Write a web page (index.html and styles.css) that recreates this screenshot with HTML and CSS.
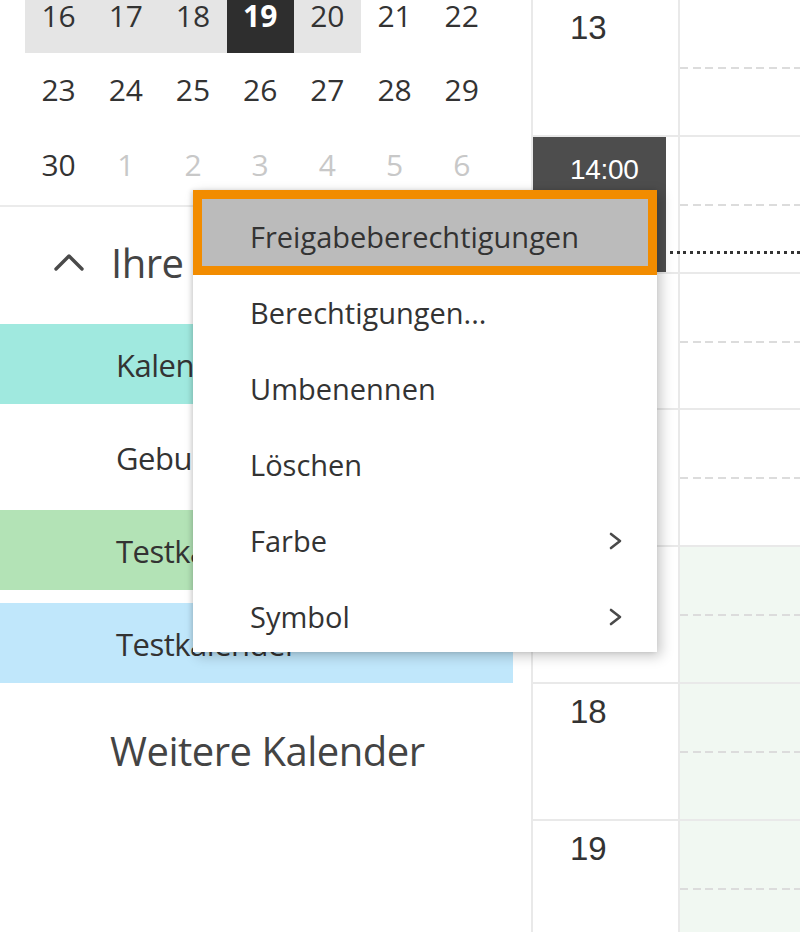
FILE: index.html
```html
<!DOCTYPE html>
<html lang="de">
<head>
<meta charset="utf-8">
<title>Kalender</title>
<link rel="stylesheet" href="styles.css">
</head>
<body>
<div class="app">
  <aside class="sidebar">
    <div class="month">
      <div class="day wk">16</div><div class="day wk">17</div><div class="day wk">18</div><div class="day today">19</div><div class="day wk">20</div><div class="day">21</div><div class="day">22</div>
      <div class="day">23</div><div class="day">24</div><div class="day">25</div><div class="day">26</div><div class="day">27</div><div class="day">28</div><div class="day">29</div>
      <div class="day">30</div><div class="day other">1</div><div class="day other">2</div><div class="day other">3</div><div class="day other">4</div><div class="day other">5</div><div class="day other">6</div>
    </div>
    <div class="sep"></div>
    <div class="group-head">
      <svg class="chev-up" width="32" height="20" viewBox="0 0 32 20"><polyline points="3,17 16,4 29,17" fill="none" stroke="#4a4a4a" stroke-width="3.4" stroke-linecap="round" stroke-linejoin="round"/></svg>
      <span class="group-title">Ihre Kalender</span>
    </div>
    <ul class="cal-list">
      <li class="cal teal">Kalender</li>
      <li class="cal">Geburtstage</li>
      <li class="cal green">Testkalender</li>
      <li class="cal blue">Testkalender</li>
    </ul>
    <div class="more">Weitere Kalender</div>
  </aside>
  <main class="timeline">
    <div class="hour"><div class="hlabel">13</div><div class="hday"><div class="half"></div></div></div>
    <div class="hour"><div class="hlabel"><div class="nowbox">14:00</div></div><div class="hday"><div class="half"></div></div></div>
    <div class="hour"><div class="hlabel"></div><div class="hday"><div class="half"></div></div></div>
    <div class="hour"><div class="hlabel"></div><div class="hday"><div class="half"></div></div></div>
    <div class="hour"><div class="hlabel"></div><div class="hday busy"><div class="half"></div></div></div>
    <div class="hour"><div class="hlabel">18</div><div class="hday busy"><div class="half"></div></div></div>
    <div class="hour"><div class="hlabel">19</div><div class="hday busy"><div class="half"></div></div></div>
  </main>
  <div class="nowline"></div>
  <div class="menu">
    <div class="mi focus">Freigabeberechtigungen</div>
    <div class="mi">Berechtigungen...</div>
    <div class="mi">Umbenennen</div>
    <div class="mi">Löschen</div>
    <div class="mi sub">Farbe<svg class="chev-r" width="16" height="20" viewBox="0 0 16 20"><polyline points="3,3 12,10 3,17" fill="none" stroke="#4a4a4a" stroke-width="2.6" stroke-linecap="round" stroke-linejoin="round"/></svg></div>
    <div class="mi sub last">Symbol<svg class="chev-r" width="16" height="20" viewBox="0 0 16 20"><polyline points="3,3 12,10 3,17" fill="none" stroke="#4a4a4a" stroke-width="2.6" stroke-linecap="round" stroke-linejoin="round"/></svg></div>
  </div>
</div>
</body>
</html>
```

FILE: styles.css
```css
* { box-sizing: border-box; }
html, body { margin: 0; padding: 0; }
body {
  width: 800px;
  height: 932px;
  overflow: hidden;
  background: #fff;
  font-family: "Open Sans", "Noto Sans", sans-serif;
  color: #333;
}
.app {
  position: relative;
  display: flex;
  height: 932px;
}
.sidebar {
  width: 533px;
  flex: 0 0 533px;
  border-right: 2px solid #e9e9e9;
}
.month {
  margin-top: -22px;
  padding-left: 25px;
  display: grid;
  grid-template-columns: repeat(7, 67.2px);
  grid-auto-rows: 74.5px;
}
.day {
  display: flex;
  align-items: center;
  justify-content: center;
  font-size: 30px;
  color: #333;
}
.day.wk { background: #e5e5e5; }
.day.today { background: #2e2e2e; color: #fff; font-weight: 700; }
.day.other { color: #c8c8c8; }
.sep {
  margin-top: 3px;
  height: 2px;
  background: #ebebeb;
}
.group-head {
  height: 117px;
  padding-bottom: 6px;
  display: flex;
  align-items: center;
}
.chev-up { margin-left: 53px; flex: none; }
.group-title {
  margin-left: 26px;
  font-size: 40px;
  letter-spacing: -0.5px;
  color: #444;
  white-space: nowrap;
}
.cal-list {
  list-style: none;
  margin: 0;
  padding: 0;
  width: 513px;
  display: flex;
  flex-direction: column;
  gap: 13px;
}
.cal {
  height: 80px;
  display: flex;
  align-items: center;
  padding-left: 116px;
  padding-top: 3px;
  font-size: 31px;
  letter-spacing: -0.5px;
  color: #333;
}
.cal.teal { background: #a0e9df; }
.cal.green { background: #b3e3b6; }
.cal.blue { background: #c0e7fb; }
.more {
  margin-top: 40px;
  padding-left: 110px;
  font-size: 40px;
  letter-spacing: -0.5px;
  color: #444;
}
.timeline {
  flex: 1;
  display: flex;
  flex-direction: column;
}
.hour {
  flex: none;
  height: 136.8px;
  display: grid;
  grid-template-columns: 147px 1fr;
  border-bottom: 2px solid #e9e9e9;
}
.hlabel {
  border-right: 2px solid #e9e9e9;
  padding: 11px 0 0 37px;
  font-family: "Liberation Sans", Arial, sans-serif;
  font-size: 33px;
  line-height: 33px;
  color: #333;
}
.hlabel:has(.nowbox) { padding: 0; }
.nowbox {
  width: 133px;
  height: 100%;
  background: #4d4d4d;
  color: #fff;
  font-family: "Liberation Sans", Arial, sans-serif;
  font-size: 28px;
  line-height: 28px;
  letter-spacing: -0.3px;
  padding: 19px 0 0 37px;
}
.hday.busy { background: #f1f8f2; }
.half {
  height: 69px;
  background: repeating-linear-gradient(to right, #dcdcdc 0 8px, transparent 8px 12.7px) left bottom / 100% 2px no-repeat;
}
.nowline {
  position: absolute;
  left: 670px;
  right: 0;
  top: 251px;
  height: 3px;
  background: repeating-linear-gradient(to right, #333 0 3px, transparent 3px 6.7px);
}
.menu {
  position: absolute;
  left: 193px;
  top: 190px;
  width: 464px;
  background: #fff;
  box-shadow: 4px 4px 12px rgba(0,0,0,0.22), -2px 0 4px rgba(0,0,0,0.12);
}
.mi {
  height: 76px;
  line-height: 76px;
  padding-left: 57px;
  padding-right: 33px;
  font-size: 29px;
  letter-spacing: 0;
  color: #333;
  display: flex;
  align-items: flex-start;
  justify-content: space-between;
  white-space: nowrap;
}
.mi.last { height: 73px; }
.mi.focus {
  height: 85px;
  border: 9px solid #f28c00;
  background: #bbbbbb;
  padding-left: 48px;
}
.chev-r { margin-top: 28px; flex: none; }
```
